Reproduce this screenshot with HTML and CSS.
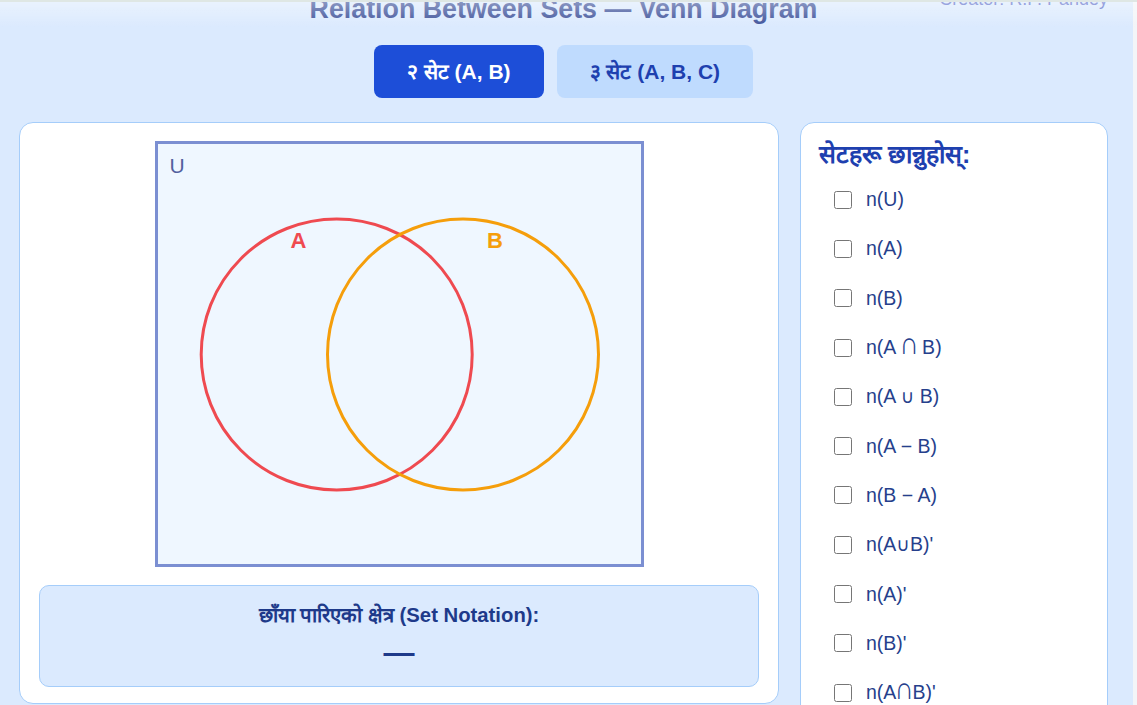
FILE: index.html
```html
<!DOCTYPE html>
<html lang="ne">
<head>
<meta charset="utf-8">
<title>Relation Between Sets — Venn Diagram</title>
<link rel="stylesheet" href="styles.css">
</head>
<body>
<div class="page">
  <header class="top">
    <p class="creator">Creator: R.P. Pandey</p>
    <h1 class="title">Relation Between Sets — Venn Diagram</h1>
  </header>

  <nav class="tabs">
    <button class="tab tab-active">२ सेट (A, B)</button>
    <button class="tab">३ सेट (A, B, C)</button>
  </nav>

  <main class="layout">
    <section class="card venn-card">
      <svg class="venn" width="489" height="426" viewBox="0 0 489 426">
        <rect x="1.5" y="1.5" width="486" height="423" class="universe"/>
        <text x="14.5" y="32.3" class="u-label">U</text>
        <circle cx="181.7" cy="213.5" r="135.5" class="set-a"/>
        <circle cx="308" cy="213.5" r="135.5" class="set-b"/>
        <text x="143.5" y="107.3" class="a-label">A</text>
        <text x="340" y="107.3" class="b-label">B</text>
      </svg>
      <div class="notation">
        <p class="notation-title">छाँया पारिएको क्षेत्र (Set Notation):</p>
        <p class="notation-value">—</p>
      </div>
    </section>

    <aside class="card picker">
      <h2 class="picker-title">सेटहरू छान्नुहोस्:</h2>
      <ul class="options">
        <li><label class="option"><input type="checkbox"><span>n(U)</span></label></li>
        <li><label class="option"><input type="checkbox"><span>n(A)</span></label></li>
        <li><label class="option"><input type="checkbox"><span>n(B)</span></label></li>
        <li><label class="option"><input type="checkbox"><span>n(A <span class="cap">∩</span> B)</span></label></li>
        <li><label class="option"><input type="checkbox"><span>n(A <span class="cup">∪</span> B)</span></label></li>
        <li><label class="option"><input type="checkbox"><span>n(A − B)</span></label></li>
        <li><label class="option"><input type="checkbox"><span>n(B − A)</span></label></li>
        <li><label class="option"><input type="checkbox"><span>n(A<span class="cup">∪</span>B)'</span></label></li>
        <li><label class="option"><input type="checkbox"><span>n(A)'</span></label></li>
        <li><label class="option"><input type="checkbox"><span>n(B)'</span></label></li>
        <li><label class="option"><input type="checkbox"><span>n(A<span class="cap">∩</span>B)'</span></label></li>
      </ul>
    </aside>
  </main>
</div>
<div class="fade"></div>
</body>
</html>
```

FILE: styles.css
```css
html {
  background: linear-gradient(90deg, #dbeafe 0, #dbeafe 1133px, #f3f5f8 1133px);
  min-height: 100%;
}

body {
  margin: 0;
  font-family: "Liberation Sans", Arial, sans-serif;
  color: #1e3a8a;
  overflow: hidden;
}

.page {
  width: 1133px;
  box-sizing: border-box;
  padding: 0 25px 0 19px;
  margin-top: -12px;
}

.top {
  display: grid;
}

.creator,
.title {
  grid-area: 1 / 1;
  margin: 0;
}

.creator {
  justify-self: end;
  font-size: 18px;
  line-height: 22px;
  color: #5d6fcb;
}

.title {
  justify-self: center;
  margin-top: 6px;
  font-size: 26.8px;
  line-height: 30px;
  font-weight: 700;
  color: #3b5099;
}

.tabs {
  display: flex;
  justify-content: center;
  gap: 13px;
  margin-top: 21px;
}

.tab {
  font-family: inherit;
  font-size: 21px;
  line-height: 23px;
  font-weight: 700;
  padding: 15px 33px;
  border: 0;
  border-radius: 8px;
  background: #bfdbfe;
  color: #1e40af;
}

.tab-active {
  background: #1d4ed8;
  color: #ffffff;
}

.layout {
  display: grid;
  grid-template-columns: 760px 308px;
  gap: 21px;
  align-items: start;
  margin-top: 24px;
}

.card {
  background: #ffffff;
  border: 1px solid #a5cdfa;
  border-radius: 14px;
  box-sizing: border-box;
}

.venn-card {
  padding: 18px 19px 16px;
}

.venn {
  display: block;
  margin: 0 auto;
}

.universe {
  fill: #eff7ff;
  stroke: #7b8fd2;
  stroke-width: 3;
}

.set-a,
.set-b {
  fill: none;
  stroke-width: 3;
}

.set-a { stroke: #ef4a50; }
.set-b { stroke: #f59e0b; }

.u-label {
  font-family: "Liberation Sans", Arial, sans-serif;
  font-size: 21px;
  fill: #52619e;
}

.a-label,
.b-label {
  font-family: "Liberation Sans", Arial, sans-serif;
  font-size: 22px;
  font-weight: 700;
  text-anchor: middle;
}

.a-label { fill: #ef4a50; }
.b-label { fill: #f59e0b; }

.notation {
  margin-top: 18px;
  background: #dbeafe;
  border: 1px solid #a5cdfa;
  border-radius: 10px;
  padding: 17px 16px 19px;
  text-align: center;
}

.notation-title {
  margin: 0;
  font-size: 20.3px;
  line-height: 24px;
  font-weight: 700;
  color: #1e3a8a;
}

.notation-value {
  margin: 12px 0 0;
  font-size: 31px;
  line-height: 28px;
  font-weight: 700;
  color: #1e3a8a;
}

.picker {
  padding: 16px 18px 20px;
  min-height: 620px;
}

.picker-title {
  margin: 0;
  font-size: 25px;
  line-height: 31px;
  font-weight: 700;
  color: #1e40af;
}

.options {
  list-style: none;
  margin: 5px 0 0;
  padding: 0 0 0 15px;
}

.option {
  display: flex;
  align-items: center;
  gap: 14px;
  height: 49.3px;
  font-size: 19.5px;
  color: #263f8c;
}

.option input {
  width: 18px;
  height: 18px;
  margin: 0;
}

.cap {
  display: inline-block;
  transform: scale(1.35, 1.6);
  transform-origin: 50% 80%;
  padding: 0 1px;
}

.cup {
  font-family: "DejaVu Sans", sans-serif;
  font-size: 18.5px;
}

.fade {
  position: fixed;
  top: 0;
  left: 0;
  right: 0;
  height: 26px;
  border-top: 2px solid #dfe7e4;
  background: linear-gradient(rgba(255, 255, 255, 0.4), rgba(255, 255, 255, 0));
  pointer-events: none;
}
```
